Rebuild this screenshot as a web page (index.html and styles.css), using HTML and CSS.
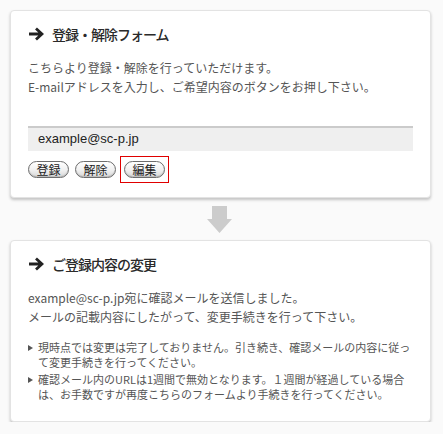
FILE: index.html
```html
<!DOCTYPE html>
<html lang="ja">
<head>
<meta charset="utf-8">
<title>登録・解除フォーム</title>
<link rel="stylesheet" href="styles.css">
</head>
<body>
<section class="card card-form">
  <h2 class="title">
    <svg class="title-icon" width="16" height="14" viewBox="0 0 16 14"><path d="M1 7H13.5M8 1.5L14 7L8 12.5" fill="none" stroke="#222" stroke-width="2.8"/></svg>
    <span>登録・解除フォーム</span>
  </h2>
  <p class="lead">こちらより登録・解除を行っていただけます。<br>E-mailアドレスを入力し、ご希望内容のボタンをお押し下さい。</p>
  <div class="input">example@sc-p.jp</div>
  <div class="actions">
    <span class="btn">登録</span>
    <span class="btn">解除</span>
    <span class="hl"><span class="btn">編集</span></span>
  </div>
</section>
<div class="flow">
  <svg width="25" height="27" viewBox="0 0 25 27"><path d="M5 0H20V13H25L12.5 27L0 13H5Z" fill="#cccccc"/></svg>
</div>
<section class="card card-done">
  <h2 class="title">
    <svg class="title-icon" width="16" height="14" viewBox="0 0 16 14"><path d="M1 7H13.5M8 1.5L14 7L8 12.5" fill="none" stroke="#222" stroke-width="2.8"/></svg>
    <span>ご登録内容の変更</span>
  </h2>
  <p class="lead">example@sc-p.jp宛に確認メールを送信しました。<br>メールの記載内容にしたがって、変更手続きを行って下さい。</p>
  <ul class="notes">
    <li>現時点では変更は完了しておりません。引き続き、確認メールの内容に従って変更手続きを行ってください。</li>
    <li>確認メール内のURLは1週間で無効となります。１週間が経過している場合は、お手数ですが再度こちらのフォームより手続きを行ってください。</li>
  </ul>
</section>
</body>
</html>
```

FILE: styles.css
```css
html, body {
  margin: 0;
  padding: 0;
}
body {
  background: #fafafa;
  font-family: "Noto Sans CJK JP", "Noto Sans", sans-serif;
  color: #555;
  padding: 10px 12px 0 10px;
  width: 443px;
  box-sizing: border-box;
}
.card {
  background: #fff;
  border: 1px solid #e3e3e3;
  border-radius: 4px;
  box-shadow: 0 2px 3px rgba(0, 0, 0, 0.22);
  padding: 13px 17px 14px;
}
.card-done {
  padding-bottom: 19px;
}
.title {
  display: flex;
  align-items: center;
  gap: 8px;
  margin: 0;
  font-size: 14px;
  line-height: 20px;
  font-weight: 500;
  letter-spacing: -1px;
  color: #2a2a2a;
}
.title-icon {
  display: block;
  flex: none;
}
.lead {
  margin: 14px 0 0;
  font-size: 12px;
  line-height: 19px;
  color: #555;
}
.input {
  margin-top: 30px;
  height: 25px;
  box-sizing: border-box;
  background: #efefef;
  border-top: 2px solid #cbcbcb;
  padding-left: 10px;
  font-family: "Liberation Sans", Arial, sans-serif;
  font-size: 13px;
  line-height: 22px;
  color: #222;
}
.actions {
  margin-top: 5px;
  display: flex;
  align-items: center;
  gap: 6px;
}
.btn {
  display: flex;
  align-items: center;
  justify-content: center;
  width: 41px;
  height: 17px;
  box-sizing: border-box;
  border: 1px solid #6d6d6d;
  border-radius: 9px;
  background: linear-gradient(#ffffff, #f0f0f0 55%, #d8d8d8);
  box-shadow: inset 0 -1px 1px rgba(0, 0, 0, 0.15);
  font-size: 12px;
  line-height: 1;
  color: #222;
}
.hl {
  display: flex;
  margin-left: -2px;
  border: 1px solid #e00000;
  padding: 4px 3px;
}
.flow {
  display: flex;
  justify-content: center;
  padding: 8px 0 7px;
  margin-left: -2px;
}
.flow svg {
  display: block;
}
.notes {
  list-style: none;
  margin: 14px 0 0;
  padding: 0;
  font-size: 11px;
  line-height: 15px;
  color: #555;
}
.notes li {
  position: relative;
  padding-left: 10px;
  margin-bottom: 2px;
}
.notes li:last-child {
  margin-bottom: 0;
}
.notes li::before {
  content: "";
  position: absolute;
  left: 0;
  top: 5px;
  border-left: 5px solid #555;
  border-top: 3px solid transparent;
  border-bottom: 3px solid transparent;
}
```
